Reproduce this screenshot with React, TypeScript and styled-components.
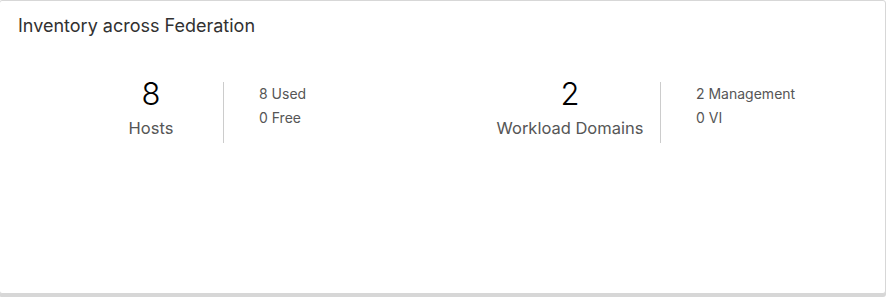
import styled, { createGlobalStyle } from 'styled-components';

const GlobalStyle = createGlobalStyle`
  html, body {
    margin: 0;
    padding: 0;
    background: #fff;
  }
  body {
    font-family: Inter, Lato, "Open Sans", sans-serif;
  }
`;

const Page = styled.div`
  padding-bottom: 3px;
`;

const Card = styled.div`
  box-sizing: border-box;
  width: 887px;
  height: 294px;
  margin-left: -1px;
  background: #fff;
  border: 1px solid #d7d7d7;
  border-radius: 3px;
  box-shadow: 0 3px 0 0 #d7d7d7;
  display: flex;
  flex-direction: column;
`;

const Title = styled.h3`
  margin: 0;
  padding: 13px 0 0 18px;
  font-size: 18px;
  line-height: 24px;
  font-weight: 400;
  color: #313131;
`;

const Row = styled.div`
  display: flex;
  padding: 44px 0 0 79px;
`;

const Group = styled.div<{ $width?: number }>`
  display: flex;
  flex: none;
  width: ${({ $width }) => ($width ? `${$width}px` : 'auto')};
`;

const Stat = styled.div<{ $width: number }>`
  width: ${({ $width }) => $width}px;
  display: flex;
  flex-direction: column;
  align-items: center;
  border-right: 1px solid #ccc;
  height: 61px;
`;

const Value = styled.div`
  font-size: 31px;
  line-height: 32px;
  font-weight: 300;
  color: #000;
  margin-top: -4px;
`;

const Label = styled.div`
  margin-top: 7px;
  font-size: 16.5px;
  line-height: 22px;
  color: #565656;
`;

const Details = styled.div`
  padding: 3px 0 0 35px;
  display: flex;
  flex-direction: column;
  gap: 6px;
`;

const Detail = styled.div`
  font-size: 14px;
  line-height: 18px;
  color: #565656;
`;

interface InventoryItemProps {
  value: number;
  label: string;
  details: string[];
  statWidth: number;
  width?: number;
}

const InventoryItem = (props: InventoryItemProps) => {
  const { value, label, details, statWidth, width } = props;
  return (
    <Group $width={width}>
      <Stat $width={statWidth}>
        <Value>{value}</Value>
        <Label>{label}</Label>
      </Stat>
      <Details>
        {details.map((d) => (
          <Detail key={d}>{d}</Detail>
        ))}
      </Details>
    </Group>
  );
};

const App = () => {
  return (
    <Page>
      <GlobalStyle />
      <Card>
        <Title>Inventory across Federation</Title>
        <Row>
          <InventoryItem
            value={8}
            label="Hosts"
            details={['8 Used', '0 Free']}
            statWidth={144}
            width={401}
          />
          <InventoryItem
            value={2}
            label="Workload Domains"
            details={['2 Management', '0 VI']}
            statWidth={180}
          />
        </Row>
      </Card>
    </Page>
  );
};

export default App;
